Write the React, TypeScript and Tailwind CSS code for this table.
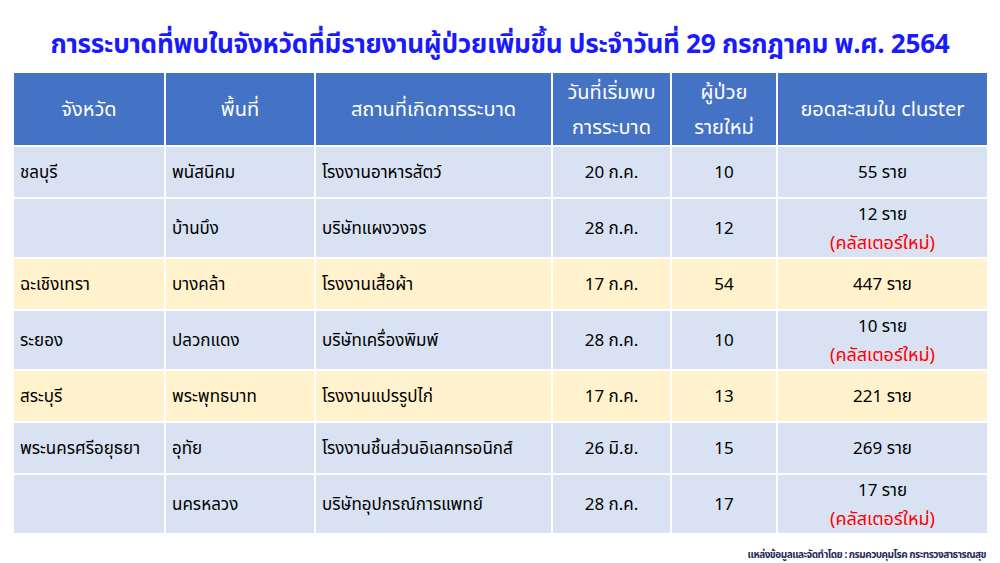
const rows = [
  { province: 'ชลบุรี', area: 'พนัสนิคม', place: 'โรงงานอาหารสัตว์', date: '20 ก.ค.', newCases: '10', total: '55 ราย', isNew: false, tone: 'blue' },
  { province: '', area: 'บ้านบึง', place: 'บริษัทแผงวงจร', date: '28 ก.ค.', newCases: '12', total: '12 ราย', isNew: true, tone: 'blue' },
  { province: 'ฉะเชิงเทรา', area: 'บางคล้า', place: 'โรงงานเสื้อผ้า', date: '17 ก.ค.', newCases: '54', total: '447 ราย', isNew: false, tone: 'yellow' },
  { province: 'ระยอง', area: 'ปลวกแดง', place: 'บริษัทเครื่องพิมพ์', date: '28 ก.ค.', newCases: '10', total: '10 ราย', isNew: true, tone: 'blue' },
  { province: 'สระบุรี', area: 'พระพุทธบาท', place: 'โรงงานแปรรูปไก่', date: '17 ก.ค.', newCases: '13', total: '221 ราย', isNew: false, tone: 'yellow' },
  { province: 'พระนครศรีอยุธยา', area: 'อุทัย', place: 'โรงงานชิ้นส่วนอิเลคทรอนิกส์', date: '26 มิ.ย.', newCases: '15', total: '269 ราย', isNew: false, tone: 'blue' },
  { province: '', area: 'นครหลวง', place: 'บริษัทอุปกรณ์การแพทย์', date: '28 ก.ค.', newCases: '17', total: '17 ราย', isNew: true, tone: 'blue' },
];

export default function App() {
  return (
    <div
      className="w-[1000px] h-[563px] bg-white flex flex-col text-black"
      style={{ fontFamily: '"Noto Sans", "Noto Sans Thai", Tahoma, sans-serif' }}
    >
      <div className="h-[73px] flex items-center justify-center pt-[14px]">
        <h1 className="text-[26.2px] font-bold text-[#1a1aff] tracking-[-0.3px] whitespace-nowrap">
          การระบาดที่พบในจังหวัดที่มีรายงานผู้ป่วยเพิ่มขึ้น ประจำวันที่ 29 กรกฎาคม พ.ศ. 2564
        </h1>
      </div>

      <div className="ml-[14px] w-[973px] grid grid-cols-[150px_148px_235px_117px_104px_209px] grid-rows-[72px_50px_58px_50px_58px_50px_50px_58px] gap-[2px] bg-white text-[17px]">
        <div className="bg-[#4472c4] text-white text-[20px] flex items-center justify-center">จังหวัด</div>
        <div className="bg-[#4472c4] text-white text-[20px] flex items-center justify-center">พื้นที่</div>
        <div className="bg-[#4472c4] text-white text-[20px] flex items-center justify-center">สถานที่เกิดการระบาด</div>
        <div className="bg-[#4472c4] text-white text-[20px] flex flex-col items-center justify-center leading-[35px]">
          <span>วันที่เริ่มพบ</span>
          <span>การระบาด</span>
        </div>
        <div className="bg-[#4472c4] text-white text-[20px] flex flex-col items-center justify-center leading-[35px]">
          <span>ผู้ป่วย</span>
          <span>รายใหม่</span>
        </div>
        <div className="bg-[#4472c4] text-white text-[20px] flex items-center justify-center">ยอดสะสมใน cluster</div>

        {rows.map((r, i) => {
          const bg = r.tone === 'yellow' ? 'bg-[#fff2cc]' : 'bg-[#d9e2f3]';
          return [
            <div key={`p${i}`} className={`${bg} flex items-center px-[6px] whitespace-nowrap`}>{r.province}</div>,
            <div key={`a${i}`} className={`${bg} flex items-center px-[6px]`}>{r.area}</div>,
            <div key={`l${i}`} className={`${bg} flex items-center px-[6px] whitespace-nowrap`}>{r.place}</div>,
            <div key={`d${i}`} className={`${bg} flex items-center justify-center`}>{r.date}</div>,
            <div key={`n${i}`} className={`${bg} flex items-center justify-center`}>{r.newCases}</div>,
            <div key={`t${i}`} className={`${bg} flex flex-col items-center justify-center leading-[28px]`}>
              <span>{r.total}</span>
              {r.isNew && <span className="text-[#ff0000] text-[18px]">(คลัสเตอร์ใหม่)</span>}
            </div>,
          ];
        })}
      </div>

      <div className="w-[986px] flex justify-end mt-[14px]">
        <span className="text-[10px] font-bold text-[#1f2a5a] tracking-[-0.5px]">แหล่งข้อมูลและจัดทำโดย : กรมควบคุมโรค กระทรวงสาธารณสุข</span>
      </div>
    </div>
  );
}
